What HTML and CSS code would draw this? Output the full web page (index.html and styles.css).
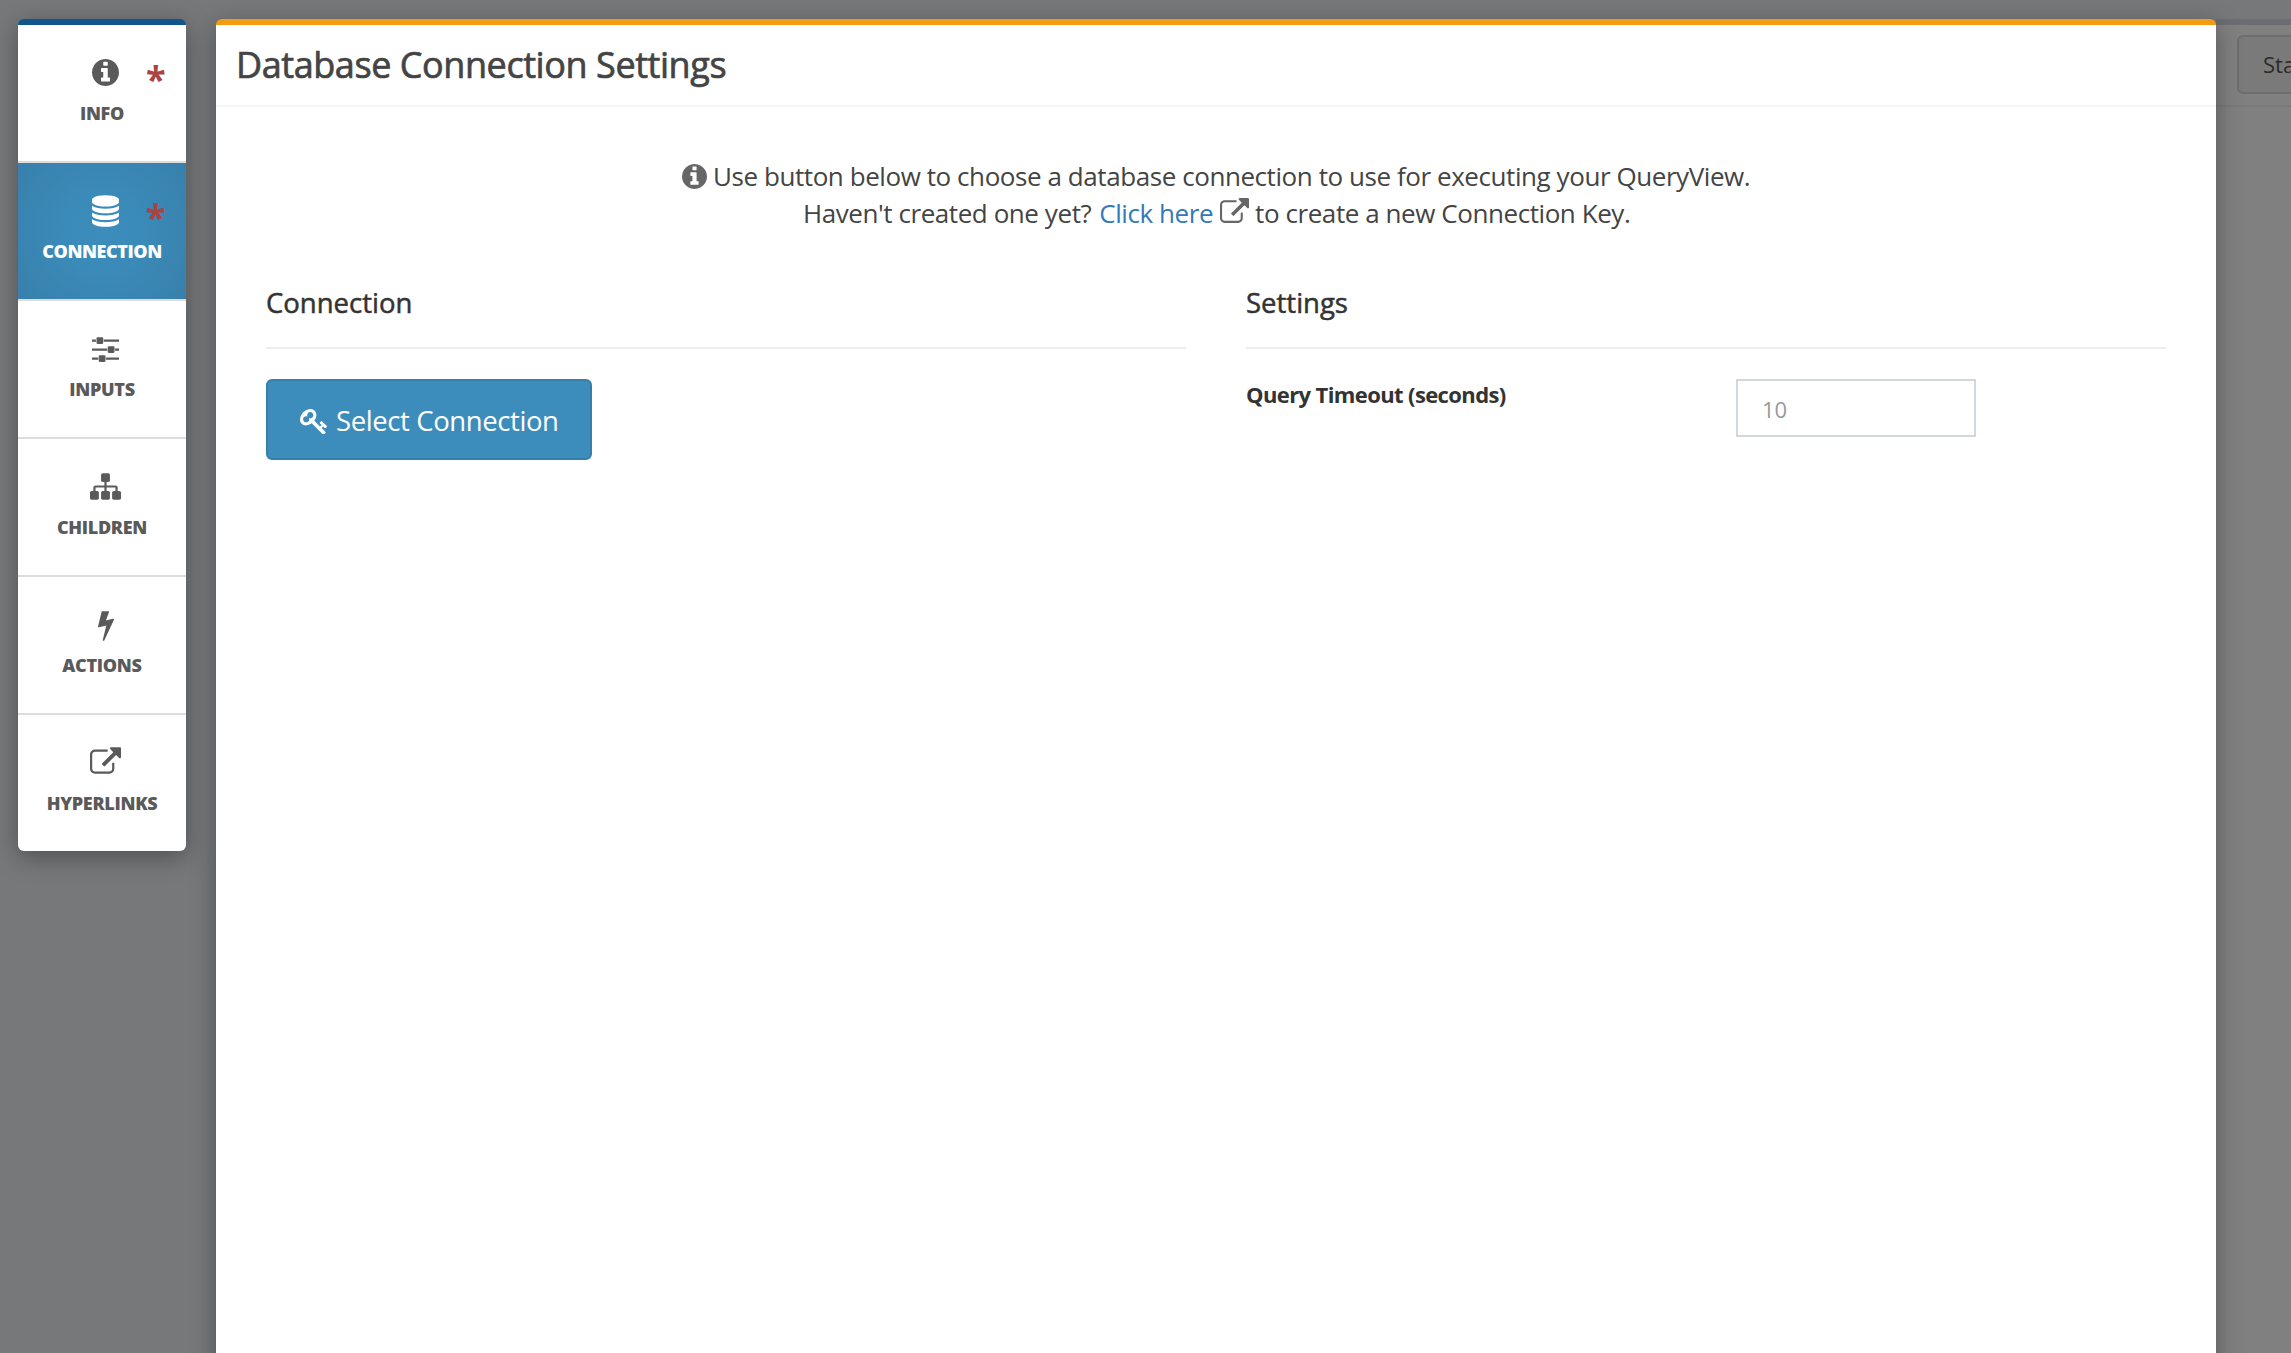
FILE: index.html
```
<!DOCTYPE html>
<html lang="en">
<head>
<meta charset="utf-8">
<title>Database Connection Settings</title>
<link rel="stylesheet" href="styles.css">
</head>
<body>
<svg class="sprite" aria-hidden="true">
  <symbol id="info" viewBox="0 0 1536 1536"><path d="M1024 1248v-160q0-14-9-23t-23-9h-96V544q0-14-9-23t-23-9H544q-14 0-23 9t-9 23v160q0 14 9 23t23 9h96v320h-96q-14 0-23 9t-9 23v160q0 14 9 23t23 9h448q14 0 23-9t9-23zM896 352V192q0-14-9-23t-23-9H672q-14 0-23 9t-9 23v160q0 14 9 23t23 9h192q14 0 23-9t9-23zm640 416q0 209-103 385.5T1153.500 1433 768 1536t-385.500-103T103 1153.500 0 768t103-385.500T382.500 103 768 0t385.500 103T1433 382.500 1536 768z"/></symbol>
  <symbol id="database" viewBox="0 0 1536 1792"><path d="M768 768q237 0 443-43t325-127v170q0 69-103 128t-280 93.500-385 34.500-385-34.500T103 896 0 768V598q119 84 325 127t443 43zm0 768q237 0 443-43t325-127v170q0 69-103 128t-280 93.500-385 34.500-385-34.500T103 1664 0 1536v-170q119 84 325 127t443 43zm0-384q237 0 443-43t325-127v170q0 69-103 128t-280 93.500-385 34.500-385-34.500T103 1280 0 1152V982q119 84 325 127t443 43zM768 0q208 0 385 34.500t280 93.500 103 128v128q0 69-103 128t-280 93.500T768 640t-385-34.500T103 512 0 384V256q0-69 103-128t280-93.500T768 0z"/></symbol>
  <symbol id="sliders" viewBox="0 0 1536 1408"><path d="M352 1152v128H0v-128h352zm352-128q26 0 45 19t19 45v256q0 26-19 45t-45 19H448q-26 0-45-19t-19-45v-256q0-26 19-45t45-19h256zm160-384v128H0V640h864zM224 128v128H0V128h224zm1312 1024v128H800v-128h736zM576 0q26 0 45 19t19 45v256q0 26-19 45t-45 19H320q-26 0-45-19t-19-45V64q0-26 19-45t45-19h256zm640 512q26 0 45 19t19 45v256q0 26-19 45t-45 19H960q-26 0-45-19t-19-45V576q0-26 19-45t45-19h256zm320 128v128h-224V640h224zm0-512v128H672V128h864z"/></symbol>
  <symbol id="sitemap" viewBox="0 0 1792 1536"><path d="M1792 1120v320q0 40-28 68t-68 28h-320q-40 0-68-28t-28-68v-320q0-40 28-68t68-28h96V832H960v192h96q40 0 68 28t28 68v320q0 40-28 68t-68 28H736q-40 0-68-28t-28-68v-320q0-40 28-68t68-28h96V832H320v192h96q40 0 68 28t28 68v320q0 40-28 68t-68 28H96q-40 0-68-28t-28-68v-320q0-40 28-68t68-28h96V832q0-52 38-90t90-38h512V512h-96q-40 0-68-28t-28-68V96q0-40 28-68t68-28h320q40 0 68 28t28 68v320q0 40-28 68t-68 28h-96v192h512q52 0 90 38t38 90v192h96q40 0 68 28t28 68z"/></symbol>
  <symbol id="bolt" viewBox="0 0 896 1664"><path d="M885 438q18 20 7 44l-540 1157q-13 25-42 25-4 0-14-2-17-5-25.500-19t-4.500-30l197-808-406 101q-4 1-12 1-18 0-31-11-18-15-13-39L202 32q4-14 16-23t28-9h328q19 0 32 12.500T619 42q0 8-5 18L443 523l396-98q8-2 12-2 19 0 34 15z"/></symbol>
  <symbol id="external" viewBox="0 0 1792 1536"><path d="M1408 928v320q0 119-84.500 203.500T1120 1536H288q-119 0-203.500-84.500T0 1248V416q0-119 84.500-203.500T288 128h704q14 0 23 9t9 23v64q0 14-9 23t-23 9H288q-66 0-113 47t-47 113v832q0 66 47 113t113 47h832q66 0 113-47t47-113V928q0-14 9-23t23-9h64q14 0 23 9t9 23zM1792 64v512q0 26-19 45t-45 19-45-19l-176-176-652 652q-10 10-23 10t-23-10L695 983q-10-10-10-23t10-23l652-652-176-176q-19-19-19-45t19-45 45-19h512q26 0 45 19t19 45z"/></symbol>
  <symbol id="key" viewBox="0 128 1683 1558"><path d="M832 512q0-80-56-136t-136-56-136 56-56 136q0 42 19 83-41-19-83-19-80 0-136 56t-56 136 56 136 136 56 136-56 56-136q0-42-19-83 41 19 83 19 80 0 136-56t56-136zm851 704q0 17-49 66t-66 49q-9 0-28.500-16t-36.500-33-38.500-40-24.500-26l-96 96 220 220q28 28 28 68 0 42-39 81t-81 39q-40 0-68-28l-671-671q-176 131-365 131-163 0-265.500-102.500T0 784q0-160 95-313t248-248 313-95q163 0 265.500 102.500T1024 496q0 189-131 365l355 355 96-96q-3-3-26-24.500t-40-38.500-33-36.500-16-28.500q0-17 49-66t66-49q13 0 23 10 6 6 46 44.500t82 79.500 86.500 86 73 78 28.500 41z"/></symbol>
</svg>

<div class="app">
  <nav class="steps">
    <a class="step"><svg class="icon i-info"><use href="#info"/></svg><span class="label">INFO</span><span class="required">*</span></a>
    <a class="step active"><svg class="icon i-database"><use href="#database"/></svg><span class="label label-wide">CONNECTION</span><span class="required">*</span></a>
    <a class="step"><svg class="icon i-sliders"><use href="#sliders"/></svg><span class="label">INPUTS</span></a>
    <a class="step"><svg class="icon i-sitemap"><use href="#sitemap"/></svg><span class="label">CHILDREN</span></a>
    <a class="step"><svg class="icon i-bolt"><use href="#bolt"/></svg><span class="label">ACTIONS</span></a>
    <a class="step"><svg class="icon i-external"><use href="#external"/></svg><span class="label">HYPERLINKS</span></a>
  </nav>

  <main class="panel">
    <header class="panel-head"><h1 class="title">Database Connection Settings</h1></header>
    <div class="intro">
      <p class="intro-line first"><svg class="intro-info"><use href="#info"/></svg><span>Use button below to choose a database connection to use for executing your QueryView.</span></p>
      <p class="intro-line second"><span>Haven't created one yet?</span><a class="link">Click here</a><svg class="intro-ext"><use href="#external"/></svg><span>to create a new Connection Key.</span></p>
    </div>
    <div class="columns">
      <section class="column">
        <h2 class="section-title">Connection</h2>
        <button class="select-btn"><svg class="key"><use href="#key"/></svg><span>Select Connection</span></button>
      </section>
      <section class="column">
        <h2 class="section-title">Settings</h2>
        <div class="field">
          <label class="field-label" for="timeout">Query Timeout (seconds)</label>
          <input class="field-input" id="timeout" type="text" placeholder="10">
        </div>
      </section>
    </div>
  </main>

  <aside class="behind">
    <div class="behind-head"><span class="behind-btn">Sta</span></div>
  </aside>
</div>
</body>
</html>
```
FILE: styles.css
```
* { box-sizing: border-box; }

body {
  margin: 0;
  height: 1353px;
  overflow: hidden;
  background: #77787a;
  color: #444;
  font-family: "Open Sans", "Noto Sans", sans-serif;
}

h1, h2, p { margin: 0; }
svg { display: block; fill: currentColor; flex: none; }
.sprite { display: none; }

.app {
  display: flex;
  align-items: flex-start;
  height: 1353px;
  padding: 19px 0 0 18px;
}

/* Step navigation */
.steps {
  width: 168px;
  margin-right: 30px;
  border-top: 6px solid #0e568c;
  border-radius: 6px;
  background: #fff;
  box-shadow: 0 6px 24px rgba(0, 0, 0, .34);
  overflow: hidden;
}
.step {
  position: relative;
  display: flex;
  flex-direction: column;
  align-items: center;
  height: 138px;
  border-bottom: 2px solid #ddd;
  color: #5a5a5a;
}
.step:last-child { height: 136px; border-bottom: 0; }
.step.active {
  background: radial-gradient(circle, #3c8dbc 0%, #3b8bba 30%, #3880ab 100%);
  color: #fff;
}
.icon { margin-left: 7px; }
.i-info { width: 27px; height: 27px; margin-top: 34px; }
.i-database { width: 27px; height: 32px; margin-top: 32px; }
.i-sliders { width: 27px; height: 25px; margin-top: 36px; }
.i-sitemap { width: 31px; height: 27px; margin-top: 34px; }
.i-bolt { width: 16px; height: 30px; margin-top: 34px; }
.i-external { width: 31px; height: 27px; margin-top: 32px; }
.label {
  position: absolute;
  top: 76px;
  font-size: 18px;
  line-height: 24px;
  font-weight: 800;
  letter-spacing: -.3px;
}
.label-wide { letter-spacing: -.44px; }
.required {
  position: absolute;
  top: 34px;
  left: 128px;
  color: #a94442;
  font-size: 36px;
  line-height: 40px;
  font-weight: 700;
}

/* Main panel */
.panel {
  position: relative;
  z-index: 1;
  width: 2000px;
  height: 1400px;
  border-top: 6px solid #f39c12;
  border-radius: 6px;
  background: #fff;
  box-shadow: 0 6px 24px rgba(0, 0, 0, .34);
}
.panel-head {
  display: flex;
  align-items: center;
  height: 82px;
  padding: 0 20px;
  border-bottom: 2px solid #f4f4f4;
}
.title {
  font-size: 36px;
  line-height: 40px;
  font-weight: 400;
  letter-spacing: -.43px;
  -webkit-text-stroke: .7px currentColor;
}
.intro { padding-top: 51px; font-size: 26px; line-height: 37px; letter-spacing: -.43px; }
.intro-line { display: flex; height: 37px; white-space: nowrap; }
.first { padding-left: 466px; }
.second { padding-left: 587px; }
.intro-info { width: 25px; height: 25px; margin: 6px 6px 0 0; color: #666; }
.intro-ext { width: 29px; height: 25px; margin: 3px 6px 0 7px; color: #666; }
.link { margin-left: 8px; color: #337ab7; }

.columns {
  display: grid;
  grid-template-columns: 920px 920px;
  gap: 60px;
  padding: 53px 50px 0;
}
.section-title {
  height: 64px;
  margin-bottom: 30px;
  border-bottom: 2px solid #eee;
  color: #333;
  font-size: 27.5px;
  font-weight: 400;
  line-height: 35px;
  -webkit-text-stroke: .5px currentColor;
}
.select-btn {
  display: flex;
  align-items: center;
  width: 326px;
  height: 81px;
  padding: 3px 0 0 32px;
  border: 2px solid #367fa9;
  border-radius: 6px;
  background: #3c8dbc;
  color: #fff;
  font: 27.5px/36px "Open Sans", "Noto Sans", sans-serif;
  letter-spacing: -.4px;
  white-space: nowrap;
}
.key { width: 27px; height: 25px; margin-right: 9px; }
.field { display: flex; }
.field-label {
  width: 490px;
  color: #333;
  font-size: 22px;
  line-height: 30px;
  font-weight: 700;
  letter-spacing: -.61px;
}
.field-input {
  width: 240px;
  height: 58px;
  padding: 1px 24px 0;
  border: 2px solid #d2d6de;
  background: #fff;
  font: 22px/30px "Open Sans", "Noto Sans", sans-serif;
}
.field-input::placeholder { color: #999; }

/* Dimmed page behind the panel */
.behind {
  flex: 1;
  height: 1340px;
  border-top: 6px solid #6c6d70;
  background: #808080;
  overflow: hidden;
}
.behind-head { height: 82px; padding: 10px 0 0 21px; border-bottom: 2px solid #7a7a7a; }
.behind-btn {
  display: block;
  width: 120px;
  height: 59px;
  padding-left: 24px;
  border: 2px solid #6e6e6e;
  border-radius: 6px;
  background: #7a7a7a;
  color: #2b2b2b;
  font-size: 22px;
  line-height: 55px;
}
```
